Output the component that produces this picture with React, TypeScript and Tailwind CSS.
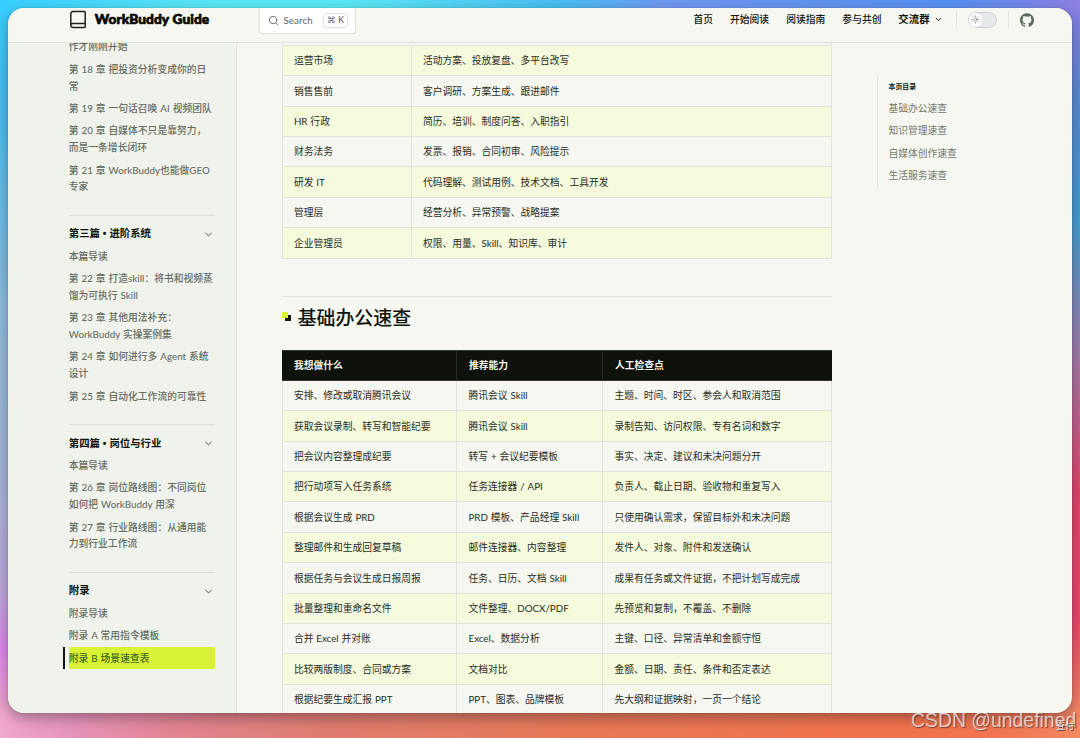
import React from "react";
import { SiGithub } from "react-icons/si";
import { ChevronDown, Search, Sun } from "lucide-react";

const sections: { title?: string[]; items: string[][] }[] = [
  {
    items: [
      ["作才刚刚开始"],
      ["第 18 章 把投资分析变成你的日", "常"],
      ["第 19 章 一句话召唤 AI 视频团队"],
      ["第 20 章 自媒体不只是靠努力，", "而是一条增长闭环"],
      ["第 21 章 WorkBuddy也能做GEO", "专家"],
    ],
  },
  {
    title: ["第三篇", "进阶系统"],
    items: [
      ["本篇导读"],
      ["第 22 章 打造skill：将书和视频蒸", "馏为可执行 Skill"],
      ["第 23 章 其他用法补充：", "WorkBuddy 实操案例集"],
      ["第 24 章 如何进行多 Agent 系统", "设计"],
      ["第 25 章 自动化工作流的可靠性"],
    ],
  },
  {
    title: ["第四篇", "岗位与行业"],
    items: [
      ["本篇导读"],
      ["第 26 章 岗位路线图：不同岗位", "如何把 WorkBuddy 用深"],
      ["第 27 章 行业路线图：从通用能", "力到行业工作流"],
    ],
  },
  {
    title: ["附录"],
    items: [["附录导读"], ["附录 A 常用指令模板"], ["附录 B 场景速查表"]],
  },
];

const roles = [
  ["运营市场", "活动方案、投放复盘、多平台改写"],
  ["销售售前", "客户调研、方案生成、跟进邮件"],
  ["HR 行政", "简历、培训、制度问答、入职指引"],
  ["财务法务", "发票、报销、合同初审、风险提示"],
  ["研发 IT", "代码理解、测试用例、技术文档、工具开发"],
  ["管理层", "经营分析、异常预警、战略提案"],
  ["企业管理员", "权限、用量、Skill、知识库、审计"],
];

const office = [
  ["安排、修改或取消腾讯会议", "腾讯会议 Skill", "主题、时间、时区、参会人和取消范围"],
  ["获取会议录制、转写和智能纪要", "腾讯会议 Skill", "录制告知、访问权限、专有名词和数字"],
  ["把会议内容整理成纪要", "转写 + 会议纪要模板", "事实、决定、建议和未决问题分开"],
  ["把行动项写入任务系统", "任务连接器 / API", "负责人、截止日期、验收物和重复写入"],
  ["根据会议生成 PRD", "PRD 模板、产品经理 Skill", "只使用确认需求，保留目标外和未决问题"],
  ["整理邮件和生成回复草稿", "邮件连接器、内容整理", "发件人、对象、附件和发送确认"],
  ["根据任务与会议生成日报周报", "任务、日历、文档 Skill", "成果有任务或文件证据，不把计划写成完成"],
  ["批量整理和重命名文件", "文件整理、DOCX/PDF", "先预览和复制，不覆盖、不删除"],
  ["合并 Excel 并对账", "Excel、数据分析", "主键、口径、异常清单和金额守恒"],
  ["比较两版制度、合同或方案", "文档对比", "金额、日期、责任、条件和否定表达"],
  ["根据纪要生成汇报 PPT", "PPT、图表、品牌模板", "先大纲和证据映射，一页一个结论"],
];

function Sidebar() {
  return (
    <aside className="flex h-full w-[229px] shrink-0 flex-col overflow-hidden border-r border-[#dfe3da] bg-[#f0f3ec] pl-[60.8px] pr-[21.5px] font-medium text-[#666d62] [word-spacing:0.5px]">
      <div className="-mt-[7.4px]">
        {sections.map((s, i) => (
          <section key={i} className={s.title ? "mt-[17.2px] border-t border-[#dbe0d6] pt-[7.4px]" : ""}>
            {s.title && (
              <div className="flex h-[21.4px] items-center justify-between pr-[1px]">
                <h2 className="text-[10.4px] font-bold text-[#0d120b] [word-spacing:0px]">
                  {s.title[0]}
                  {s.title[1] && (
                    <span className="font-['Liberation_Sans',sans-serif]">{" • "}</span>
                  )}
                  {s.title[1]}
                </h2>
                <ChevronDown className="size-[11px] text-[#7f877b]" strokeWidth={2.2} />
              </div>
            )}
            {s.items.map((lines, j) => {
              const active = lines[0].startsWith("附录 B");
              return (
                <div
                  key={j}
                  className={active ? "-ml-[5.8px] flex border-l-2 border-[#10150e] pl-[3.8px]" : ""}
                >
                  <a
                    className={
                      active
                        ? "block flex-1 rounded-[2px] bg-[#d9f235] py-[2.8px] leading-[16.8px] text-[#3f6a1a]"
                        : "block py-[2.8px] leading-[16.8px]"
                    }
                  >
                    {lines.map((l) => (
                      <span key={l} className="block whitespace-nowrap">{l}</span>
                    ))}
                  </a>
                </div>
              );
            })}
          </section>
        ))}
      </div>
    </aside>
  );
}

function Row({ cells, cols, tinted }: { cells: string[]; cols: string; tinted: boolean }) {
  return (
    <div
      className={`grid h-[30.36px] shrink-0 border-b border-l border-[#dfe3d8] ${cols} ${tinted ? "bg-[#f5fadd]" : "bg-[#f6f7f1]"}`}
    >
      {cells.map((c, i) => (
        <div
          key={i}
          className={`flex items-center whitespace-nowrap border-r border-[#dfe3d8] text-[#272d24] ${i === 0 || cells.length === 2 ? "pl-[10.9px]" : "pl-[11.5px]"}`}
        >
          {c}
        </div>
      ))}
    </div>
  );
}

function Header() {
  return (
    <header className="flex h-[35px] shrink-0 items-start border-b border-[#dfe2da] bg-[#f6f7f1] pl-[61px] text-[#10150e]">
      <svg className="mt-[2px] h-[19px] w-[18px]" viewBox="0 0 18 19" fill="none" stroke="#1c211a" strokeWidth="1.5" strokeLinejoin="round">
        <path d="M1.8 15.6V3.6A2 2 0 0 1 3.8 1.6H15.2A1 1 0 0 1 16.2 2.6V16.4A1 1 0 0 1 15.2 17.4H3.8A2 2 0 0 1 1.8 15.6A2 2 0 0 1 3.8 13.4H16.2" />
      </svg>
      <div className="ml-[7.8px] w-[165.2px] whitespace-nowrap font-[Lato,sans-serif] text-[13.7px] font-black leading-[22px] tracking-[0.07px] text-[#050804] [-webkit-text-stroke:0.7px_#050804]">
        WorkBuddy Guide
      </div>
      <div className="-ml-[1px] flex h-[26px] w-[97px] items-center rounded-b-[3px] border border-t-0 border-[#e0e3dc] bg-white pb-[1px] pl-[8px] text-[#60685c]">
        <Search className="size-[11px]" strokeWidth={1.9} />
        <span className="ml-[4.5px] w-[39.5px] text-[9.75px] tracking-[0.1px]">Search</span>
        <kbd className="flex h-[15px] w-[25px] items-center justify-center rounded-[3px] border border-[#dfe2dc] font-[Lato,'DejaVu_Sans',sans-serif] text-[8.5px] font-medium">
          ⌘ K
        </kbd>
      </div>
      <nav className="ml-[337.6px] flex h-[23px] items-center font-medium">
        <span className="w-[36.3px]">首页</span>
        <span className="w-[56.3px]">开始阅读</span>
        <span className="w-[56.2px]">阅读指南</span>
        <span className="w-[56px]">参与共创</span>
        <span className="text-[10.4px] font-bold">交流群</span>
        <ChevronDown className="ml-[4px] size-[9px]" strokeWidth={2.6} />
      </nav>
      <span className="ml-[13.9px] mt-[3px] h-[17px] w-px bg-[#e2e5dd]" />
      <div className="ml-[10.5px] mt-[4px] flex h-[15.5px] w-[29px] items-center rounded-full border border-[#d0d2d2] bg-[#e7e9e9]">
        <span className="flex size-[13.5px] items-center justify-center rounded-full bg-white">
          <Sun className="size-[9px] text-[#777d75]" strokeWidth={2} />
        </span>
      </div>
      <span className="ml-[11px] mt-[3px] h-[17px] w-px bg-[#e2e5dd]" />
      <SiGithub className="ml-[11px] mt-[4.5px] size-[14px] text-[#60685c]" />
    </header>
  );
}

export default function App() {
  return (
    <div className="relative h-[738px] w-[1080px] overflow-hidden px-[8px] pt-[8px] font-[Lato,'Noto_Sans_CJK_SC',sans-serif] text-[9.78px] [word-spacing:0.4px] [background:linear-gradient(90deg,#36cfff_0%,#5ce8f5_20%,#5be8f4_32%,#49bdf2_52%,#7197f0_62%,#5590ef_88%,#8c80e5_100%)_0_0/100%_9px_no-repeat,linear-gradient(90deg,#f0a9cb_0%,#e693b9_7%,#e38492_16%,#df7d70_30%,#e87854_55%,#f1724c_80%,#f17550_92%,#f48763_100%)_0_712px/100%_26px_no-repeat,linear-gradient(180deg,#36cfff_0px,#48bdf0_110px,#90bddd_310px,#a7b6d8_480px,#bda8dc_590px,#df88eb_650px,#f0a9cb_712px)_0_0/30px_100%_no-repeat,linear-gradient(180deg,#8c80e5_0px,#588bd2_100px,#439fd2_220px,#a57ba7_360px,#e0466b_490px,#ee4669_620px,#f48763_712px)_100%_0/30px_100%_no-repeat]">
      <div className="flex h-[705px] flex-col overflow-hidden rounded-[16px] bg-[#f6f7f1] shadow-[0_5px_14px_rgba(30,20,40,0.38),0_0_1px_rgba(0,0,0,0.45)]">
        <Header />
        <div className="flex min-h-0 flex-1">
          <Sidebar />
          <main className="ml-[45px] flex w-[550px] shrink-0 flex-col overflow-hidden">
            <div className="h-[3px] shrink-0 border-x border-b border-[#dfe3d8]" />
            {roles.map((r, i) => (
              <Row key={r[0]} cells={r} cols="grid-cols-[129px_1fr]" tinted={i % 2 === 0} />
            ))}
            <div className="mt-[37.4px] flex h-[54px] shrink-0 items-start border-t border-[#dfe3da] pt-[7px]">
              <svg className="mt-[8px] size-[10px]" viewBox="0 0 10 10">
                <path d="M3 3H9V9H3Z" fill="#10150e" />
                <path d="M0 0H6V6H0Z" fill="#d9f235" />
              </svg>
              <h1 className="ml-[5.7px] text-[18.9px] font-medium leading-[27px] text-[#10150e]">基础办公速查</h1>
            </div>
            <div className="grid h-[31.1px] shrink-0 grid-cols-[175px_146px_1fr] border-y border-[#30372c] bg-[#0d120b] font-bold text-[#f6f7f1]">
              <div className="flex items-center border-r border-[#252a22] pl-[12px]">我想做什么</div>
              <div className="flex items-center border-r border-[#252a22] pl-[12px]">推荐能力</div>
              <div className="flex items-center pl-[12px]">人工检查点</div>
            </div>
            {office.map((r, i) => (
              <Row key={r[0]} cells={r} cols="grid-cols-[174px_146px_1fr]" tinted={i % 2 === 1} />
            ))}
          </main>
          <aside className="ml-[44.5px] mt-[33px] h-[112px] border-l border-[#e2e5dd] pl-[11px] text-[#73796e]">
            <h3 className="flex h-[21.2px] items-center text-[6.9px] font-bold text-[#10150e]">本页目录</h3>
            {["基础办公速查", "知识管理速查", "自媒体创作速查", "生活服务速查"].map((t) => (
              <a key={t} className="flex h-[22.4px] items-center whitespace-nowrap">{t}</a>
            ))}
          </aside>
        </div>
      </div>
      <div className="absolute left-[911px] top-[708px] whitespace-nowrap font-['Liberation_Sans',sans-serif] text-[19.4px] leading-[24px] text-white/70 [text-shadow:1px_1px_1px_rgba(60,30,30,0.6)] [word-spacing:0]">
        CSDN @undefined
      </div>
      <div className="absolute left-[1056px] top-[720px] text-[9px] leading-[12px] text-white/80 [text-shadow:1px_1px_0_rgba(40,40,40,0.8)]">
        查付
      </div>
    </div>
  );
}
